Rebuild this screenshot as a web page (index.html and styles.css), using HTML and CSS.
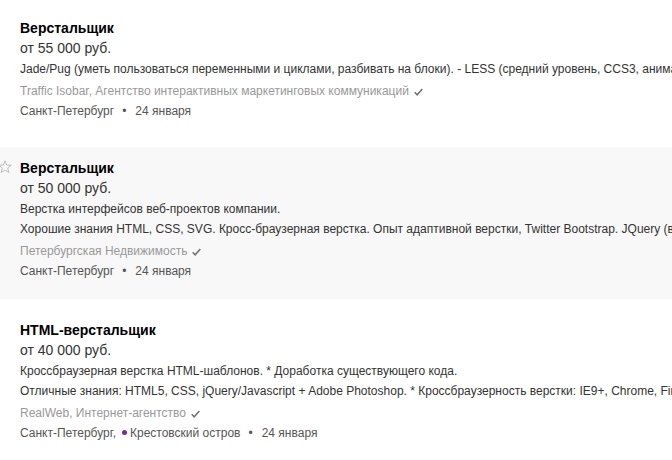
FILE: index.html
```html
<!DOCTYPE html>
<html lang="ru">
<head>
<meta charset="utf-8">
<title>Вакансии</title>
<link rel="stylesheet" href="styles.css">
</head>
<body>
<div class="list">
  <div class="vacancy">
    <div class="vacancy__title">Верстальщик</div>
    <div class="vacancy__salary">от 55 000 руб.</div>
    <div class="vacancy__desc">
      <div class="vacancy__line">Jade/Pug (уметь пользоваться переменными и циклами, разбивать на блоки). - LESS (средний уровень, CCS3, анимации, медиазапросы).</div>
    </div>
    <div class="vacancy__company">Traffic Isobar, Агентство интерактивных маркетинговых коммуникаций<svg class="check" viewBox="0 0 9 8" width="9" height="8"><path d="M0.7 4.3 L3.2 6.8 L8.3 0.9" fill="none" stroke="#6f6f6f" stroke-width="1.5"/></svg></div>
    <div class="vacancy__meta">Санкт-Петербург<span class="sep">•</span>24 января</div>
  </div>

  <div class="vacancy vacancy--hover">
    <div class="vacancy__title"><svg class="star" viewBox="0 0 14 14" width="14" height="14"><path d="M7 0.8 L8.7 5 L13.2 5.2 L9.7 8 L10.9 12.6 L7 10 L3.1 12.6 L4.3 8 L0.8 5.2 L5.3 5 Z" fill="none" stroke="#b5b5b5" stroke-width="0.9" stroke-linejoin="round"/></svg>Верстальщик</div>
    <div class="vacancy__salary">от 50 000 руб.</div>
    <div class="vacancy__desc">
      <div class="vacancy__line">Верстка интерфейсов веб-проектов компании.</div>
      <div class="vacancy__line">Хорошие знания HTML, CSS, SVG. Кросс-браузерная верстка. Опыт адаптивной верстки, Twitter Bootstrap. JQuery (в том числе написание плагинов).</div>
    </div>
    <div class="vacancy__company">Петербургская Недвижимость<svg class="check" viewBox="0 0 9 8" width="9" height="8"><path d="M0.7 4.3 L3.2 6.8 L8.3 0.9" fill="none" stroke="#6f6f6f" stroke-width="1.5"/></svg></div>
    <div class="vacancy__meta">Санкт-Петербург<span class="sep">•</span>24 января</div>
  </div>

  <div class="vacancy vacancy--after">
    <div class="vacancy__title">HTML-верстальщик</div>
    <div class="vacancy__salary">от 40 000 руб.</div>
    <div class="vacancy__desc">
      <div class="vacancy__line">Кроссбраузерная верстка HTML-шаблонов. * Доработка существующего кода.</div>
      <div class="vacancy__line">Отличные знания: HTML5, CSS, jQuery/Javascript + Adobe Photoshop. * Кроссбраузерность верстки: IE9+, Chrome, Firefox, Safari, Opera.</div>
    </div>
    <div class="vacancy__company">RealWeb, Интернет-агентство<svg class="check" viewBox="0 0 9 8" width="9" height="8"><path d="M0.7 4.3 L3.2 6.8 L8.3 0.9" fill="none" stroke="#6f6f6f" stroke-width="1.5"/></svg></div>
    <div class="vacancy__meta">Санкт-Петербург,<span class="metro"></span>Крестовский остров<span class="sep">•</span>24 января</div>
  </div>
</div>
</body>
</html>
```
FILE: styles.css
```css
html, body {
  margin: 0;
  padding: 0;
  background: #fff;
  overflow: hidden;
}
body {
  font-family: "Liberation Sans", Arial, sans-serif;
  color: #333;
}
.list {
  padding-top: 7px;
}
.vacancy {
  padding: 11px 0 18px 20px;
  white-space: nowrap;
  overflow: hidden;
}
.vacancy + .vacancy {
  margin-top: 8px;
}
.vacancy--hover {
  background: #f8f8f8;
}
.vacancy + .vacancy--after {
  margin-top: 10px;
}
.vacancy__title {
  position: relative;
  font-size: 14px;
  font-weight: bold;
  line-height: 20px;
  color: #000;
}
.star {
  position: absolute;
  left: -22px;
  top: 2px;
}
.vacancy__salary {
  font-size: 14px;
  line-height: 20px;
  color: #333;
}
.vacancy__desc {
  margin-top: 1px;
  font-size: 12px;
  line-height: 20.5px;
  color: #333;
}
.vacancy__company {
  margin-top: 1px;
  font-size: 12px;
  line-height: 20px;
  color: #999;
}
.check {
  margin-left: 5px;
  vertical-align: -1px;
}
.vacancy__meta {
  font-size: 12px;
  line-height: 20px;
  color: #555;
}
.sep {
  padding: 0 9px 0 8px;
  color: #555;
}
.metro {
  display: inline-block;
  width: 5px;
  height: 5px;
  border-radius: 50%;
  background: #7b2a8f;
  margin: 0 3px 0 6px;
  vertical-align: 2px;
}
```
